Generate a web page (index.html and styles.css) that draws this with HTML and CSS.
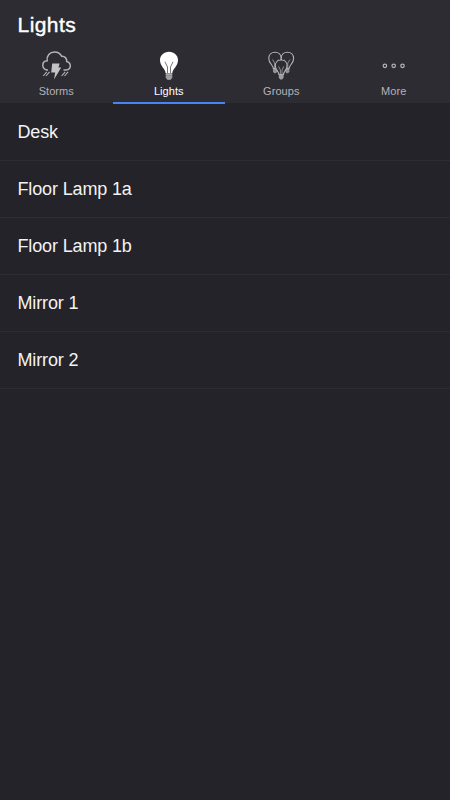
FILE: index.html
```html
<!DOCTYPE html>
<html lang="en">
<head>
<meta charset="utf-8">
<title>Lights</title>
<link rel="stylesheet" href="styles.css">
</head>
<body>
<header class="header">
  <h1 class="title">Lights</h1>
  <nav class="tabs">
    <a class="tab">
      <svg class="icon" viewBox="40 50 32 32">
        <path d="M48 70H46.8C44.3 69.5 42.8 67.8 42.8 65.3C42.8 62.8 44.6 61 47.2 60.8C46.4 56 49.8 52 54.5 52C58 52 60.4 53.5 61.6 56.3C64.8 56.1 67 58.3 66.7 61.4C69 61.9 70.3 63.5 70.3 65.7C70.3 68 68.7 69.7 66 70H63.5" fill="none" stroke="currentColor" stroke-width="1.5"/>
        <path d="M52.2 63.6H59.6L58.5 67.6H61.2L54 79.6L55.2 72.4H51.2Z" fill="#c4c3c5"/>
        <path d="M46.8 71.8L43.2 76M49.5 71.8L46 76M65.2 71.8L61.6 76M68.1 71.8L64.5 76" fill="none" stroke="currentColor" stroke-width="1.1"/>
      </svg>
      <span class="label">Storms</span>
    </a>
    <a class="tab active">
      <svg class="icon" viewBox="153 50 32 32">
        <path d="M165.7 73.5C165.5 69 160 66.2 160 60.3C160 55.2 163.8 51.7 169 51.7C174.2 51.7 178 55.2 178 60.3C178 66.2 172.5 69 172.3 73.5Z" fill="currentColor"/>
        <path d="M167.5 73V67L165 61.8M170.5 73V67L173 61.8" fill="none" stroke="#2d2c33" stroke-width=".65"/>
        <path d="M165.7 74H172.3V77.6L170.6 79.8H167.4L165.7 77.6Z" fill="#aaa9ac"/>
        <path d="M165.7 75.5H172.3M165.7 77.2H172.3" stroke="#55545a" stroke-width=".3"/>
      </svg>
      <span class="label">Lights</span>
    </a>
    <a class="tab">
      <svg class="icon" viewBox="265 50 32 32">
        <g fill="#2d2c33" stroke="currentColor" stroke-width="1.1">
          <g id="back-bulb">
            <path d="M273.3 68.5C273.1 65 268.8 63.5 268.8 58.4C268.8 54.8 271.4 52.3 275 52.3C278.6 52.3 281.2 54.8 281.2 58.4C281.2 63.5 277.9 65 277.7 68.5Z"/>
            <path d="M274.6 68V63L272.5 59.5M276.2 68V63L278.3 59.5" fill="none" stroke-width=".7"/>
            <path d="M273 69H277V71.8L276 73.2H274.3L273 71.8Z" fill="#929195" stroke="none"/>
          </g>
          <use href="#back-bulb" transform="translate(562.4 0) scale(-1 1)"/>
          <path d="M278.9 74.5C278.7 71 275.3 69.8 275.3 65.6C275.3 62.3 277.7 60 281.2 60C284.7 60 287.1 62.3 287.1 65.6C287.1 69.8 283.7 71 283.5 74.5Z"/>
          <path d="M280.4 74.2V70L278.6 66.4M282 74.2V70L283.8 66.4" fill="none" stroke-width=".7"/>
          <path d="M278.8 74.7H283.6V77.7L282.1 79.6H280.3L278.8 77.7Z" fill="#9e9da0" stroke="none"/>
        </g>
      </svg>
      <span class="label">Groups</span>
    </a>
    <a class="tab">
      <svg class="icon" viewBox="378 50 32 32">
        <g fill="none" stroke="currentColor" stroke-width="1.2">
          <circle cx="384.9" cy="65.8" r="1.75"/>
          <circle cx="393.7" cy="65.8" r="1.75"/>
          <circle cx="402.5" cy="65.8" r="1.75"/>
        </g>
      </svg>
      <span class="label">More</span>
    </a>
  </nav>
</header>
<ul class="list">
  <li class="row">Desk</li>
  <li class="row">Floor Lamp 1a</li>
  <li class="row">Floor Lamp 1b</li>
  <li class="row">Mirror 1</li>
  <li class="row">Mirror 2</li>
</ul>
</body>
</html>
```
FILE: styles.css
```css
* { box-sizing: border-box; }
body {
  margin: 0;
  min-height: 800px;
  background: #242329;
  color: #f3f3f3;
  font-family: "Liberation Sans", Arial, sans-serif;
}
.header {
  height: 103px;
  background: #2d2c33;
}
.title {
  margin: 0;
  height: 50px;
  padding-left: 17.5px;
  font-size: 21px;
  line-height: 49px;
  font-weight: 400;
  letter-spacing: .45px;
  color: #fff;
  -webkit-text-stroke: .4px #fff;
}
.tabs {
  display: grid;
  grid-template-columns: repeat(4, 1fr);
  height: 54px;
}
.tab {
  display: flex;
  flex-direction: column;
  align-items: center;
  color: #b4b3b6;
  border-bottom: 2px solid transparent;
}
.active {
  color: #fff;
  border-bottom-color: #4785f4;
}
.icon {
  width: 32px;
  height: 32px;
}
.label {
  font-size: 11px;
  line-height: 18px;
  letter-spacing: .05px;
}
.list {
  list-style: none;
  margin: 0;
  padding: 1px 0 0;
}
.row {
  height: 57px;
  padding-left: 17.5px;
  font-size: 18px;
  line-height: 56px;
  letter-spacing: -.14px;
  border-bottom: 1px solid #2d2c32;
}
```
